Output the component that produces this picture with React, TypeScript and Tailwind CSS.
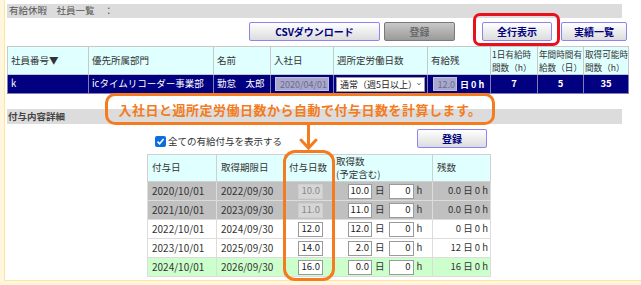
import React from "react";

type GrantRow = {
  date: string;
  limit: string;
  days: string;
  used: string;
  rest: string;
  kind: "old" | "normal" | "current";
};

const grants: GrantRow[] = [
  { date: "2020/10/01", limit: "2022/09/30", days: "10.0", used: "10.0", rest: "0.0 日 0 h", kind: "old" },
  { date: "2021/10/01", limit: "2023/09/30", days: "11.0", used: "11.0", rest: "0.0 日 0 h", kind: "old" },
  { date: "2022/10/01", limit: "2024/09/30", days: "12.0", used: "12.0", rest: "0 日 0 h", kind: "normal" },
  { date: "2023/10/01", limit: "2025/09/30", days: "14.0", used: "2.0", rest: "12 日 0 h", kind: "normal" },
  { date: "2024/10/01", limit: "2026/09/30", days: "16.0", used: "0.0", rest: "16 日 0 h", kind: "current" },
];

const rowBg = {
  old: "bg-[#c0c0c0]",
  normal: "bg-white",
  current: "bg-[#ccffcc]",
};

function NavyButton({ label, width }: { label: string; width: string }) {
  return (
    <div
      className={`${width} h-[19px] flex items-center justify-center border border-[#8c84f0] rounded-[2px] bg-gradient-to-b from-white to-[#dcdcdc] text-[#000080] font-bold text-[10px]`}
    >
      {label}
    </div>
  );
}

export default function App() {
  return (
    <div className="w-[641px] h-[285px] bg-[#fff6dc] pl-[4px] pb-[4px] relative overflow-hidden font-['Noto_Sans_CJK_JP',sans-serif] text-[9.5px] text-[#333] leading-none whitespace-nowrap">
      <div className="h-full bg-white border-l border-b border-[#ffe6a0] pl-[2px] pt-[4px]">
        {/* Title */}
        <div className="w-[615px] h-[14px] bg-[#dcdcdc] pl-[2px] flex items-center text-[#555]">
          有給休暇　社員一覧　：
        </div>

        {/* Buttons */}
        <div className="flex mt-[4px] h-[19px]">
          <div className="ml-[242px]">
            <NavyButton label="CSVダウンロード" width="w-[131px]" />
          </div>
          <div className="ml-[4px] w-[71px] h-[19px] flex items-center justify-center border border-[#7a7a7a] rounded-[2px] bg-gradient-to-b from-[#c8c8c8] to-[#9a9a9a] text-[#6a6a6a] font-bold text-[10px]">
            登録
          </div>
          <div className="ml-[27px]">
            <NavyButton label="全行表示" width="w-[70px]" />
          </div>
          <div className="ml-[9px]">
            <NavyButton label="実績一覧" width="w-[66px]" />
          </div>
        </div>

        {/* Employee table */}
        <table className="mt-[5px] w-[621px] table-fixed border-collapse border border-[#c8c8c8]">
          <colgroup>
            <col className="w-[81px]" />
            <col className="w-[125px]" />
            <col className="w-[57px]" />
            <col className="w-[63px]" />
            <col className="w-[94px]" />
            <col className="w-[63px]" />
            <col className="w-[47px]" />
            <col className="w-[46px]" />
            <col className="w-[45px]" />
          </colgroup>
          <thead>
            <tr className="h-[28px] bg-[#e0ffff] text-left">
              <th className="font-normal border border-[#c8c8c8] px-[3px]">社員番号▼</th>
              <th className="font-normal border border-[#c8c8c8] px-[3px]">優先所属部門</th>
              <th className="font-normal border border-[#c8c8c8] px-[3px]">名前</th>
              <th className="font-normal border border-[#c8c8c8] px-[3px]">入社日</th>
              <th className="font-normal border border-[#c8c8c8] px-[3px]">週所定労働日数</th>
              <th className="font-normal border border-[#c8c8c8] px-[3px]">有給残</th>
              <th className="font-normal border border-[#c8c8c8] px-[1px] text-[8.6px] leading-[13px] overflow-hidden">
                1日有給時
                <br />
                間数（h）
              </th>
              <th className="font-normal border border-[#c8c8c8] px-[1px] text-[8.6px] leading-[13px] overflow-hidden">
                年間時間有
                <br />
                給数（日）
              </th>
              <th className="font-normal border border-[#c8c8c8] px-[1px] text-[8.6px] leading-[13px] overflow-hidden">
                取得可能時
                <br />
                間数（h）
              </th>
            </tr>
          </thead>
          <tbody>
            <tr className="h-[19px] bg-[#000080] text-white">
              <td className="border border-[#8080b0] px-[3px]">k</td>
              <td className="border border-[#8080b0] px-[3px]">icタイムリコーダー事業部</td>
              <td className="border border-[#8080b0] px-[3px]">勤怠　太郎</td>
              <td className="border border-[#8080b0] px-[4px]">
                <div className="h-[14px] bg-[#a8a8cc] border border-[#c0c0dc] text-[#6c6c8c] flex items-center justify-end pr-[1px] text-[9px]">
                  2020/04/01
                </div>
              </td>
              <td className="border border-[#8080b0] px-[2px]">
                <div className="h-[15px] bg-white border border-[#9a9a9a] text-[#222] flex items-center justify-between pl-[3px] pr-[3px] text-[9px]">
                  <span>通常（週5日以上）</span>
                  <svg width="8" height="6" viewBox="0 0 8 6">
                    <path d="M1 1.5 L4 4.5 L7 1.5" fill="none" stroke="#222" strokeWidth="1.6" />
                  </svg>
                </div>
              </td>
              <td className="border border-[#8080b0] pl-[5px] pr-0">
                <div className="flex items-center gap-[3px]">
                  <div className="w-[24px] h-[14px] bg-[#a8a8cc] border border-[#c0c0dc] text-[#6c6c8c] flex items-center justify-end pr-[1px] text-[9px]">
                    12.0
                  </div>
                  <span className="font-bold text-[9px]">日 0 h</span>
                </div>
              </td>
              <td className="border border-[#8080b0] text-center font-bold">7</td>
              <td className="border border-[#8080b0] text-center font-bold">5</td>
              <td className="border border-[#8080b0] text-center font-bold">35</td>
            </tr>
          </tbody>
        </table>

        {/* Detail section */}
        <div className="mt-[15px] w-[615px] h-[15px] bg-[#dcdcdc] pl-[1px] flex items-center text-[#444] font-bold">
          付与内容詳細
        </div>

        <div className="ml-[140px] w-[340px] mt-[5px] h-[19px] flex items-center justify-between pl-[8px]">
          <div className="flex items-center gap-[2px] mt-[6px]">
            <span className="w-[11px] h-[11px] rounded-[2px] bg-[#0b6ee0] flex items-center justify-center">
              <svg width="9" height="9" viewBox="0 0 9 9">
                <path d="M1.5 4.6 L3.6 6.8 L7.6 2" fill="none" stroke="white" strokeWidth="1.6" />
              </svg>
            </span>
            <span>全ての有給付与を表示する</span>
          </div>
          <NavyButton label="登録" width="w-[70px]" />
        </div>

        <table className="ml-[140px] mt-[6px] w-[343px] table-fixed border-collapse border border-[#d0d0d0]">
          <colgroup>
            <col className="w-[69px]" />
            <col className="w-[68px]" />
            <col className="w-[49px]" />
            <col className="w-[99px]" />
            <col className="w-[58px]" />
          </colgroup>
          <thead>
            <tr className="h-[27px] bg-[#e0ffff] text-left">
              <th className="font-normal border border-[#d0d0d0] px-[4px]">付与日</th>
              <th className="font-normal border border-[#d0d0d0] px-[4px]">取得期限日</th>
              <th className="font-normal border border-[#d0d0d0] px-[4px]">付与日数</th>
              <th className="font-normal border border-[#d0d0d0] px-[2px] leading-[13px]">
                取得数
                <br />
                (予定含む)
              </th>
              <th className="font-normal border border-[#d0d0d0] px-[4px]">残数</th>
            </tr>
          </thead>
          <tbody>
            {grants.map((g) => (
              <tr key={g.date} className={`h-[19px] ${rowBg[g.kind]}`}>
                <td className="border border-[#dcdcdc] px-[4px] text-[10px]">{g.date}</td>
                <td className="border border-[#dcdcdc] px-[4px] text-[10px]">{g.limit}</td>
                <td className="border border-[#dcdcdc]">
                  <div
                    className={`ml-[13px] w-[25px] h-[15px] flex items-center justify-end pr-[2px] ${
                      g.kind === "old"
                        ? "bg-[#d6d6d6] border border-[#cfcfcf] text-[#888]"
                        : "bg-white border border-[#9a9a9a] text-[#222]"
                    }`}
                  >
                    {g.days}
                  </div>
                </td>
                <td className="border border-[#dcdcdc]">
                  <div className="flex items-center pl-[14px]">
                    <div className="w-[24px] h-[15px] bg-white border border-[#9a9a9a] flex items-center justify-end pr-[2px] text-[#222]">
                      {g.used}
                    </div>
                    <span className="ml-[3px]">日</span>
                    <div className="ml-[4px] w-[25px] h-[15px] bg-white border border-[#9a9a9a] flex items-center justify-end pr-[2px] text-[#222]">
                      0
                    </div>
                    <span className="ml-[3px]">h</span>
                  </div>
                </td>
                <td className="border border-[#dcdcdc] text-right pr-[2px]">{g.rest}</td>
              </tr>
            ))}
          </tbody>
        </table>
      </div>

      {/* Red highlight around 全行表示 */}
      <div className="absolute left-[473px] top-[13px] w-[87px] h-[33px] border-[3px] border-[#e8101a] rounded-[7px]" />

      {/* Annotation */}
      <div className="absolute left-[105px] top-[93px] w-[390px] h-[32px] border-[3px] border-[#f47b20] rounded-[10px] flex items-center justify-center">
        <span className="text-[#f47b20] font-bold text-[13px] tracking-[0.5px]">
          入社日と週所定労働日数から自動で付与日数を計算します。
        </span>
      </div>
      <svg className="absolute left-[298px] top-[124px]" width="22" height="28" viewBox="0 0 22 28">
        <path d="M10.5 0 L10.5 24" stroke="#f47b20" strokeWidth="3" fill="none" />
        <path d="M3 16 L10.5 24 L18 16" stroke="#f47b20" strokeWidth="3" fill="none" strokeLinecap="round" />
      </svg>
      <div className="absolute left-[283px] top-[150px] w-[52px] h-[131px] border-[3px] border-[#f47b20] rounded-[12px]" />
    </div>
  );
}
